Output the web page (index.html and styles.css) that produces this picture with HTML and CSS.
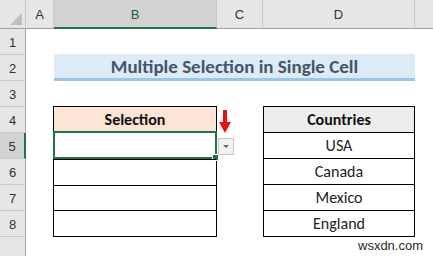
FILE: index.html
```html
<!DOCTYPE html>
<html lang="en">

<head>
    <meta charset="UTF-8" />
    <meta name="viewport" content="width=device-width, initial-scale=1.0" />
    <title>Multiple Selection in Single Cell</title>
    <link rel="stylesheet" href="styles.css">
</head>

<body>
    <div class="sheet">
        <!-- column headers -->
        <div class="corner"><span class="corner-tri"></span></div>
        <div class="col-head">A</div>
        <div class="col-head active">B</div>
        <div class="col-head">C</div>
        <div class="col-head">D</div>
        <div class="col-head last"></div>

        <!-- row headers -->
        <div class="row-head r1">1</div>
        <div class="row-head r2">2</div>
        <div class="row-head r3">3</div>
        <div class="row-head r4">4</div>
        <div class="row-head r5 active">5</div>
        <div class="row-head r6">6</div>
        <div class="row-head r7">7</div>
        <div class="row-head r8">8</div>
        <div class="row-head r9"></div>

        <div class="title">Multiple Selection in Single Cell</div>

        <div class="table selection">
            <div class="cell head">Selection</div>
            <div class="cell selected">
                <span class="fill-handle"></span>
                <span class="dropdown"><span class="dropdown-tri"></span></span>
                <svg class="arrow" width="12" height="24" viewBox="0 0 12 24">
                    <rect x="4" y="0" width="4" height="13" fill="#e8110f" />
                    <polygon points="0,12 12,12 6,23" fill="#e8110f" />
                </svg>
            </div>
            <div class="cell"></div>
            <div class="cell"></div>
            <div class="cell"></div>
        </div>

        <div class="table countries">
            <div class="cell head">Countries</div>
            <div class="cell">USA</div>
            <div class="cell">Canada</div>
            <div class="cell">Mexico</div>
            <div class="cell">England</div>
        </div>
    </div>

    <div class="watermark">wsxdn.com</div>
</body>

</html>
```

FILE: styles.css
```css
body {
    margin: 0;
    width: 433px;
    height: 256px;
    overflow: hidden;
    background-color: white;
    font-family: Carlito, Lato, "Open Sans", sans-serif;
    position: relative;
}

.sheet {
    display: grid;
    grid-template-columns: 26px 28px 163px 46px 152px 1fr;
    grid-template-rows: 29px repeat(9, 26px);
    height: 256px;
}

/* headers */
.corner {
    background-color: #e6e6e6;
    border-right: 1px solid #c8c8c8;
    border-bottom: 1px solid #a0a0a0;
    position: relative;
}

.corner-tri {
    position: absolute;
    right: 3px;
    bottom: 3px;
    width: 0;
    height: 0;
    border-left: 12px solid transparent;
    border-bottom: 12px solid #bfbfbf;
}

.col-head {
    background-color: #e6e6e6;
    border-right: 1px solid #c8c8c8;
    border-bottom: 1px solid #a0a0a0;
    display: flex;
    align-items: center;
    justify-content: center;
    font-family: "Liberation Sans", Arial, sans-serif;
    font-size: 13px;
    color: #333;
    padding-top: 1px;
}

.col-head.active {
    background-color: #d2d2d2;
    border-bottom: 2px solid #217346;
    color: #1e5e3a;
}

.col-head.last {
    border-right: none;
}

.row-head {
    grid-column: 1;
    background-color: #e6e6e6;
    border-right: 1px solid #a0a0a0;
    border-bottom: 1px solid #c8c8c8;
    display: flex;
    align-items: center;
    justify-content: center;
    font-family: "Liberation Sans", Arial, sans-serif;
    font-size: 13px;
    color: #333;
    padding-top: 2px;
}

.row-head.active {
    background-color: #d2d2d2;
    border-right: 2px solid #217346;
}

.r9 {
    border-bottom: none;
}

/* title band */
.title {
    grid-column: 3 / 6;
    grid-row: 3;
    margin-top: -1px;
    background-color: #ddebf7;
    border-bottom: 3px solid #9dc3e6;
    display: flex;
    align-items: center;
    justify-content: center;
    font-weight: bold;
    font-size: 19px;
    color: #44546a;
}

/* tables */
.table {
    grid-row: 5 / 10;
    border: 1px solid #000;
    display: flex;
    flex-direction: column;
    margin-top: -1px;
}

.selection {
    grid-column: 3;
    margin-left: -1px;
}

.countries {
    grid-column: 5;
}

.cell {
    flex: 1;
    border-top: 1px solid #000;
    display: flex;
    align-items: center;
    justify-content: center;
    font-size: 16px;
    color: #222;
    position: relative;
}

.cell.head {
    border-top: none;
    font-weight: bold;
    color: #111;
}

.selection .head {
    background-color: #fce4d6;
}

.countries .head {
    background-color: #ededed;
}

.cell.selected {
    border: 2px solid #217346;
    margin: -1px -1px 0 -1px;
}

.fill-handle {
    position: absolute;
    right: -4px;
    bottom: -4px;
    width: 5px;
    height: 5px;
    background-color: #217346;
    border: 1px solid white;
}

.dropdown {
    position: absolute;
    left: calc(100% + 3px);
    top: 5px;
    width: 14px;
    height: 15px;
    background-color: #f2f2f2;
    border: 1px solid #c6c6c6;
    display: flex;
    align-items: center;
    justify-content: center;
}

.dropdown-tri {
    width: 0;
    height: 0;
    border-left: 3px solid transparent;
    border-right: 3px solid transparent;
    border-top: 3px solid #666;
}

.arrow {
    position: absolute;
    left: calc(100% + 4px);
    top: -23px;
}

.watermark {
    position: absolute;
    left: 358px;
    top: 238px;
    font-family: "Liberation Sans", Arial, sans-serif;
    font-size: 13px;
    color: #2a2a2a;
}
```
